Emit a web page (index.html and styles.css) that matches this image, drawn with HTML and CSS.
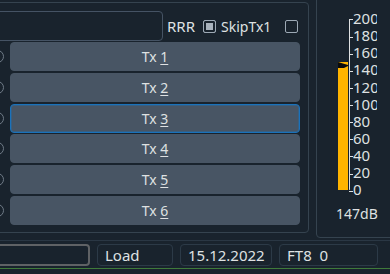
FILE: index.html
```html
<!DOCTYPE html>
<html lang="en">
<head>
    <meta charset="UTF-8">
    <title>Tx panel</title>
    <link rel="stylesheet" href="styles.css">
</head>
<body>
    <div class="window">
        <div class="panes">
            <section class="tx-frame">
                <div class="msg-row">
                    <div class="line-edit"></div>
                    <span class="rrr">RRR</span>
                    <span class="check checked"></span>
                    <span class="check-label">SkipTx1</span>
                    <span class="check last"></span>
                </div>
                <div class="tx-list">
                    <div class="tx-row"><span class="radio"></span><button class="tx-btn">Tx <u>1</u></button></div>
                    <div class="tx-row"><span class="radio"></span><button class="tx-btn">Tx <u>2</u></button></div>
                    <div class="tx-row"><span class="radio"></span><button class="tx-btn focus">Tx <u>3</u></button></div>
                    <div class="tx-row"><span class="radio"></span><button class="tx-btn">Tx <u>4</u></button></div>
                    <div class="tx-row"><span class="radio"></span><button class="tx-btn">Tx <u>5</u></button></div>
                    <div class="tx-row"><span class="radio"></span><button class="tx-btn">Tx <u>6</u></button></div>
                </div>
            </section>
            <section class="meter-frame">
                <div class="meter">
                    <div class="bar">
                        <svg class="peak" width="10" height="6" viewBox="0 0 10 6"><polygon points="0,0 10,3 10,4 6,6 0,6" fill="#0b0b0b"/></svg>
                        <div class="bar-fill" style="height: 122px"></div>
                    </div>
                    <div class="scale">
                        <div>200</div>
                        <div>180</div>
                        <div>160</div>
                        <div>140</div>
                        <div>120</div>
                        <div>100</div>
                        <div>80</div>
                        <div>60</div>
                        <div>40</div>
                        <div>20</div>
                        <div>0</div>
                    </div>
                </div>
                <div class="meter-value">147dB</div>
            </section>
        </div>
        <div class="status-bar">
            <div class="field wide"></div>
            <div class="field load">Load</div>
            <div class="field date">15.12.2022</div>
            <div class="field mode">FT8  0</div>
        </div>
        <div class="green-line"></div>
        <div class="grip"></div>
    </div>
</body>
</html>
```

FILE: styles.css
```css
body {
    margin: 0;
    background: #19232d;
    font-family: "Noto Sans", "Open Sans", sans-serif;
    font-size: 14px;
    color: #dfe1e2;
    width: 390px;
    height: 274px;
    overflow: hidden;
}
.window {
    position: relative;
    height: 274px;
}
.panes {
    display: flex;
    align-items: flex-start;
    height: 238px;
}

/* left frame with message row and Tx buttons */
.tx-frame {
    box-sizing: border-box;
    width: 321px;
    height: 231px;
    margin: 2px 0 0 -12px;
    padding: 8px 8px 0 2px;
    border: 1px solid #35434f;
    border-radius: 4px;
}
.msg-row {
    display: flex;
    align-items: center;
    height: 30px;
}
.line-edit {
    box-sizing: border-box;
    width: 172px;
    height: 30px;
    border: 1px solid #455364;
    border-radius: 4px;
}
.rrr {
    margin-left: 4px;
    font-size: 15px;
}
.check {
    box-sizing: border-box;
    width: 13px;
    height: 13px;
    margin-left: 8px;
    border: 1px solid #9da9b5;
    border-radius: 2px;
}
.check.checked {
    background: #a9b3bd;
    box-shadow: inset 0 0 0 2px #19232d;
}
.check.last {
    margin-left: auto;
    margin-right: 2px;
}
.check-label {
    margin-left: 5px;
}
.tx-list {
    display: flex;
    flex-direction: column;
    gap: 1.8px;
    margin-top: 1px;
}
.tx-row {
    display: flex;
    align-items: center;
    gap: 6px;
    height: 29px;
}
.radio {
    box-sizing: border-box;
    width: 13px;
    height: 13px;
    border: 1px solid #6e7a86;
    border-radius: 50%;
}
.tx-btn {
    flex: 1;
    height: 29px;
    padding: 0;
    background: #485564;
    border: 1px solid #485564;
    border-radius: 4px;
    color: #dfe1e2;
    font: inherit;
}
.tx-btn.focus {
    border-color: #1a72bb;
    box-shadow: inset 0 0 0 1px rgba(26, 114, 187, 0.35);
}
.tx-btn u {
    text-underline-offset: 2px;
}

/* signal meter */
.meter-frame {
    box-sizing: border-box;
    flex: 1;
    height: 248px;
    margin: -10px -10px 0 7px;
    border: 1px solid #35434f;
    border-radius: 4px;
}
.meter {
    display: flex;
    align-items: flex-start;
    margin-top: 19px;
}
.bar {
    display: flex;
    flex-direction: column;
    justify-content: flex-end;
    width: 10px;
    height: 171.4px;
    margin: 8.57px 0 0 21px;
}
.peak {
    display: block;
    background: #ffb400;
}
.bar-fill {
    background: #ffb400;
}
.scale {
    width: 28px;
    margin-left: 1px;
    overflow: hidden;
    font-size: 15px;
    background: linear-gradient(#dfe1e2, #dfe1e2) no-repeat 0 8.57px / 1px calc(100% - 17.14px);
}
.scale div {
    height: 17.14px;
    line-height: 17.14px;
    white-space: nowrap;
}
.scale div::before {
    content: "";
    display: inline-block;
    width: 4px;
    height: 1px;
    background: #dfe1e2;
    vertical-align: middle;
}
.meter-value {
    margin: 6px 0 0 19px;
}

/* bottom status fields */
.status-bar {
    display: flex;
    gap: 7px;
    margin: 2px 0 0 -10px;
    padding-top: 3px;
    border-top: 1px solid #2a3744;
    font-size: 15px;
}
.field {
    box-sizing: border-box;
    height: 22px;
    padding: 0 7px;
    border: 1px solid #2c3a47;
    border-radius: 4px;
    line-height: 20px;
    white-space: pre;
}
.field.wide {
    width: 100px;
    border: 2px solid #5f6265;
}
.field.load {
    width: 76px;
}
.field.date {
    width: 92px;
}
.field.mode {
    width: 99px;
}
.green-line {
    height: 1px;
    margin-top: 2px;
    background: #3f7a3a;
}
.grip {
    position: absolute;
    right: 1px;
    bottom: 2px;
    width: 5px;
    height: 5px;
    background: radial-gradient(circle, #6b7682 40%, transparent 45%) 0 0 / 2px 2px;
}
```
